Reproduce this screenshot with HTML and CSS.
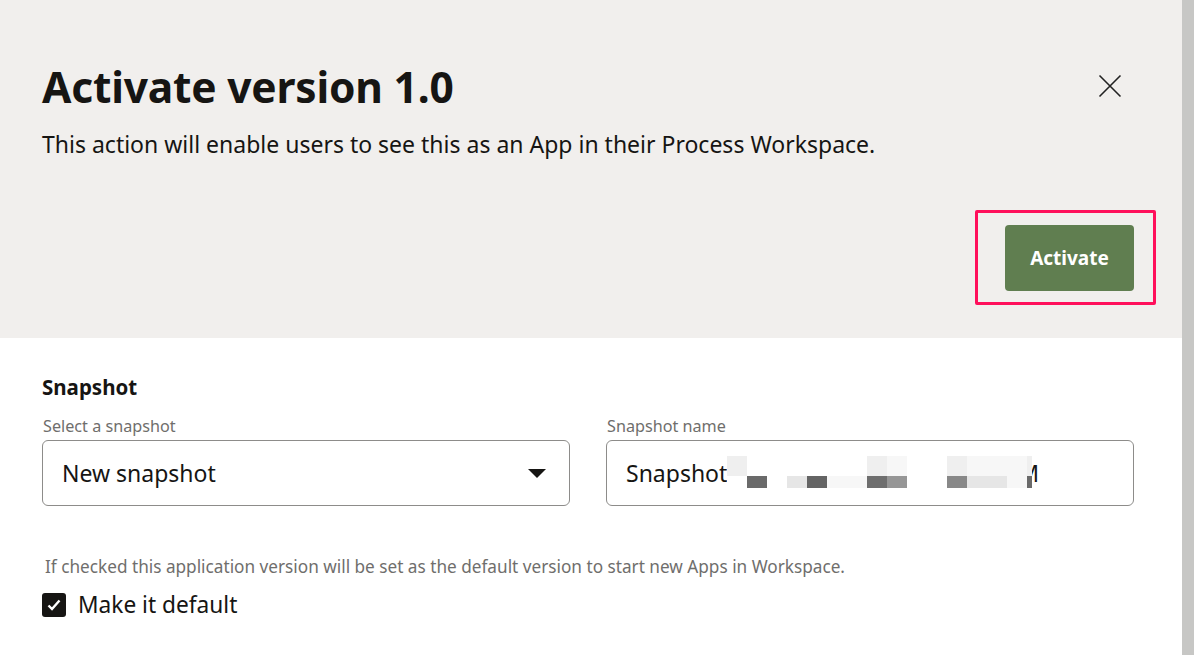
FILE: index.html
```html
<!DOCTYPE html>
<html lang="en">
<head>
<meta charset="utf-8">
<title>Activate version 1.0</title>
<link rel="stylesheet" href="styles.css">
</head>
<body>
<div class="page">
  <main class="dialog">
    <header class="head">
      <div class="head-top">
        <div class="titles">
          <h1 class="title">Activate version 1.0</h1>
          <p class="subtitle">This action will enable users to see this as an App in their Process Workspace.</p>
        </div>
        <button class="close" aria-label="Close">
          <svg width="24" height="24" viewBox="0 0 24 24"><path d="M1.5 1.5 L22.5 22.5 M22.5 1.5 L1.5 22.5" stroke="#222" stroke-width="1.6" fill="none"/></svg>
        </button>
      </div>
      <div class="actions">
        <div class="btn-wrap">
          <button class="btn-primary">Activate</button>
          <span class="highlight"></span>
        </div>
      </div>
    </header>
    <section class="body">
      <h2 class="section-title">Snapshot</h2>
      <div class="fields">
        <div class="field">
          <label class="label">Select a snapshot</label>
          <div class="control select">
            <span class="value">New snapshot</span>
            <svg class="caret" width="18" height="10" viewBox="0 0 18 10"><path d="M0 0 H18 L9 9 Z" fill="#161513"/></svg>
          </div>
        </div>
        <div class="field">
          <label class="label">Snapshot name</label>
          <div class="control input">
            <span class="value">Snapshot</span>
            <span class="redact">
              <span class="px"><i class="t l2"></i><i class="b"></i></span>
              <span class="px"><i class="t"></i><i class="b d1"></i></span>
              <span class="px"><i class="t"></i><i class="b"></i></span>
              <span class="px"><i class="t"></i><i class="b l1"></i></span>
              <span class="px"><i class="t"></i><i class="b d2"></i></span>
              <span class="px"><i class="t"></i><i class="b l3"></i></span>
              <span class="px"><i class="t"></i><i class="b l3"></i></span>
              <span class="px"><i class="t l2"></i><i class="b d3"></i></span>
              <span class="px"><i class="t l3"></i><i class="b m1"></i></span>
              <span class="px"><i class="t"></i><i class="b"></i></span>
              <span class="px"><i class="t"></i><i class="b"></i></span>
              <span class="px"><i class="t l2"></i><i class="b m2"></i></span>
              <span class="px"><i class="t l3"></i><i class="b l1"></i></span>
              <span class="px"><i class="t l3"></i><i class="b l1"></i></span>
              <span class="px"><i class="t l3"></i><i class="b l3"></i></span>
              <span class="px narrow"><i class="t l2"></i><i class="b d1"></i></span>
            </span>
            <span class="m-tail">M</span>
          </div>
        </div>
      </div>
      <p class="help">If checked this application version will be set as the default version to start new Apps in Workspace.</p>
      <label class="check">
        <span class="box">
          <svg width="16" height="14" viewBox="0 0 16 14"><path d="M2.5 7.5 L6 11 L13.5 2.5" stroke="#fff" stroke-width="2.4" fill="none"/></svg>
        </span>
        <span class="check-text">Make it default</span>
      </label>
    </section>
  </main>
  <div class="scrollbar"></div>
</div>
</body>
</html>
```

FILE: styles.css
```css
* { box-sizing: border-box; }
html, body { margin: 0; padding: 0; }
body {
  font-family: "Noto Sans", "Open Sans", sans-serif;
  color: #161513;
  background: #fff;
}
.page {
  display: flex;
  width: 1194px;
  height: 655px;
  overflow: hidden;
}
.dialog {
  flex: 1;
  display: flex;
  flex-direction: column;
}
.scrollbar {
  width: 12px;
  background: #c7c7c5;
}
.head {
  background: #f1efed;
  height: 338px;
  padding: 60px 48px 0 42px;
}
.head-top {
  display: flex;
  justify-content: space-between;
  align-items: flex-start;
}
.title {
  margin: 0;
  font-size: 42.5px;
  font-weight: 700;
  line-height: 54px;
  letter-spacing: -0.2px;
}
.subtitle {
  margin: 15px 0 0 0;
  font-size: 23px;
  line-height: 30px;
}
.close {
  border: 0;
  background: none;
  padding: 0;
  margin: 14px 12px 0 0;
  width: 24px;
  height: 24px;
  cursor: pointer;
}
.actions {
  display: flex;
  justify-content: flex-end;
  margin-top: 66px;
}
.btn-wrap {
  position: relative;
}
.btn-primary {
  display: block;
  width: 129px;
  height: 66px;
  border: 0;
  border-radius: 4px;
  background: #607e50;
  color: #fff;
  font-family: inherit;
  font-size: 19px;
  font-weight: 700;
}
.highlight {
  position: absolute;
  left: -30px;
  top: -15px;
  width: 181px;
  height: 95px;
  border: 3.5px solid #ff0f5b;
  border-radius: 2px;
}
.body {
  padding: 35px 48px 0 42px;
}
.section-title {
  margin: 0;
  font-size: 20.5px;
  font-weight: 700;
  line-height: 28px;
}
.fields {
  display: flex;
  gap: 36px;
  margin-top: 15px;
}
.field {
  flex: 1;
  display: flex;
  flex-direction: column;
}
.label {
  font-size: 16.2px;
  line-height: 20px;
  color: #6f6e6c;
  margin-left: 1px;
  margin-bottom: 4px;
}
.control {
  height: 66px;
  border: 1px solid #8d8c8a;
  border-radius: 6px;
  display: flex;
  align-items: center;
  padding: 0 20px 0 19px;
  font-size: 23px;
}
.select { justify-content: space-between; padding-right: 23px; }
.caret { margin-top: 1px; }
.value { line-height: 30px; }
.redact {
  display: flex;
  align-self: center;
  margin-top: -2px;
  position: relative;
  z-index: 1;
}
.px {
  display: flex;
  flex-direction: column;
  width: 20px;
}
.px.narrow { width: 5px; }
.px i { display: block; width: 100%; }
.px .t { height: 20px; background: #fff; }
.px .b { height: 12px; background: #fff; }
.px .l1 { background: #e6e6e6; }
.px .l2 { background: #efefef; }
.px .l3 { background: #f7f7f7; }
.px .d1 { background: #6a6a6a; }
.px .d2 { background: #646464; }
.px .d3 { background: #6e6e6e; }
.px .m1 { background: #969696; }
.px .m2 { background: #888888; }
.m-tail {
  line-height: 30px;
  margin-left: -14px;
}
.help {
  margin: 49px 0 0 3px;
  font-size: 17.2px;
  line-height: 24px;
  color: #6f6e6c;
}
.check {
  display: flex;
  align-items: center;
  gap: 12px;
  margin-top: 11px;
}
.box {
  width: 24px;
  height: 24px;
  background: #161513;
  border-radius: 3px;
  display: flex;
  align-items: center;
  justify-content: center;
}
.check-text {
  font-size: 22.7px;
  line-height: 30px;
}
```
